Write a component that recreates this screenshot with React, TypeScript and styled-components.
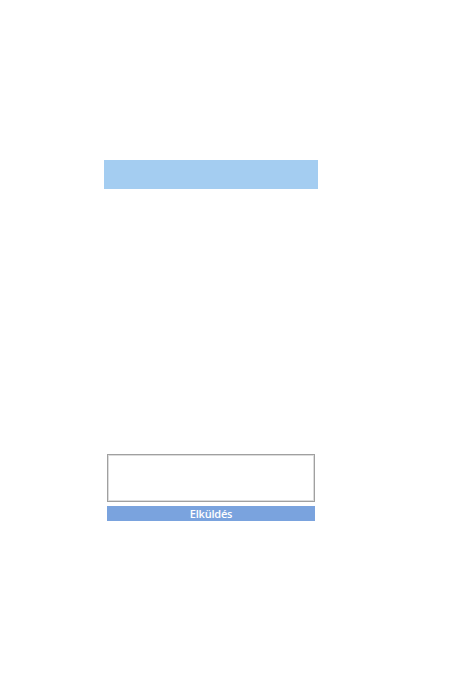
import React from "react";
import styled, { createGlobalStyle } from "styled-components";

const Global = createGlobalStyle`
  html, body { margin: 0; padding: 0; background: #ffffff; }
  body { font-family: "Open Sans", "Noto Sans", sans-serif; }
`;

const Page = styled.div`
  width: 450px;
  height: 680px;
  display: flex;
  flex-direction: column;
  padding-top: 160px;
  box-sizing: border-box;
`;

const Banner = styled.div`
  margin-left: 104px;
  width: 214px;
  height: 29px;
  background: #a4cdf1;
`;

const Form = styled.form`
  margin-left: 107px;
  margin-top: 265px;
  width: 208px;
  display: flex;
  flex-direction: column;
  gap: 4px;
`;

const Message = styled.textarea`
  width: 208px;
  height: 48px;
  box-sizing: border-box;
  border: 1px solid #a0a0a0;
  box-shadow: inset 0 0 0 1px #dcdcdc;
  margin: 0;
  padding: 2px;
  resize: none;
  outline: none;
  font-family: "Open Sans", sans-serif;
  font-size: 11px;
`;

const Send = styled.button`
  width: 208px;
  height: 15px;
  margin: 0;
  padding: 0;
  border: none;
  background: #7aa3de;
  color: #ffffff;
  font-family: "Open Sans", "Noto Sans", sans-serif;
  font-size: 11px;
  font-weight: 600;
  letter-spacing: -0.2px;
  line-height: 15px;
  text-align: center;
  cursor: pointer;
`;

export default function App() {
  return (
    <>
      <Global />
      <Page>
        <Banner />
        <Form onSubmit={(e) => e.preventDefault()}>
          <Message />
          <Send type="submit">Elküldés</Send>
        </Form>
      </Page>
    </>
  );
}
